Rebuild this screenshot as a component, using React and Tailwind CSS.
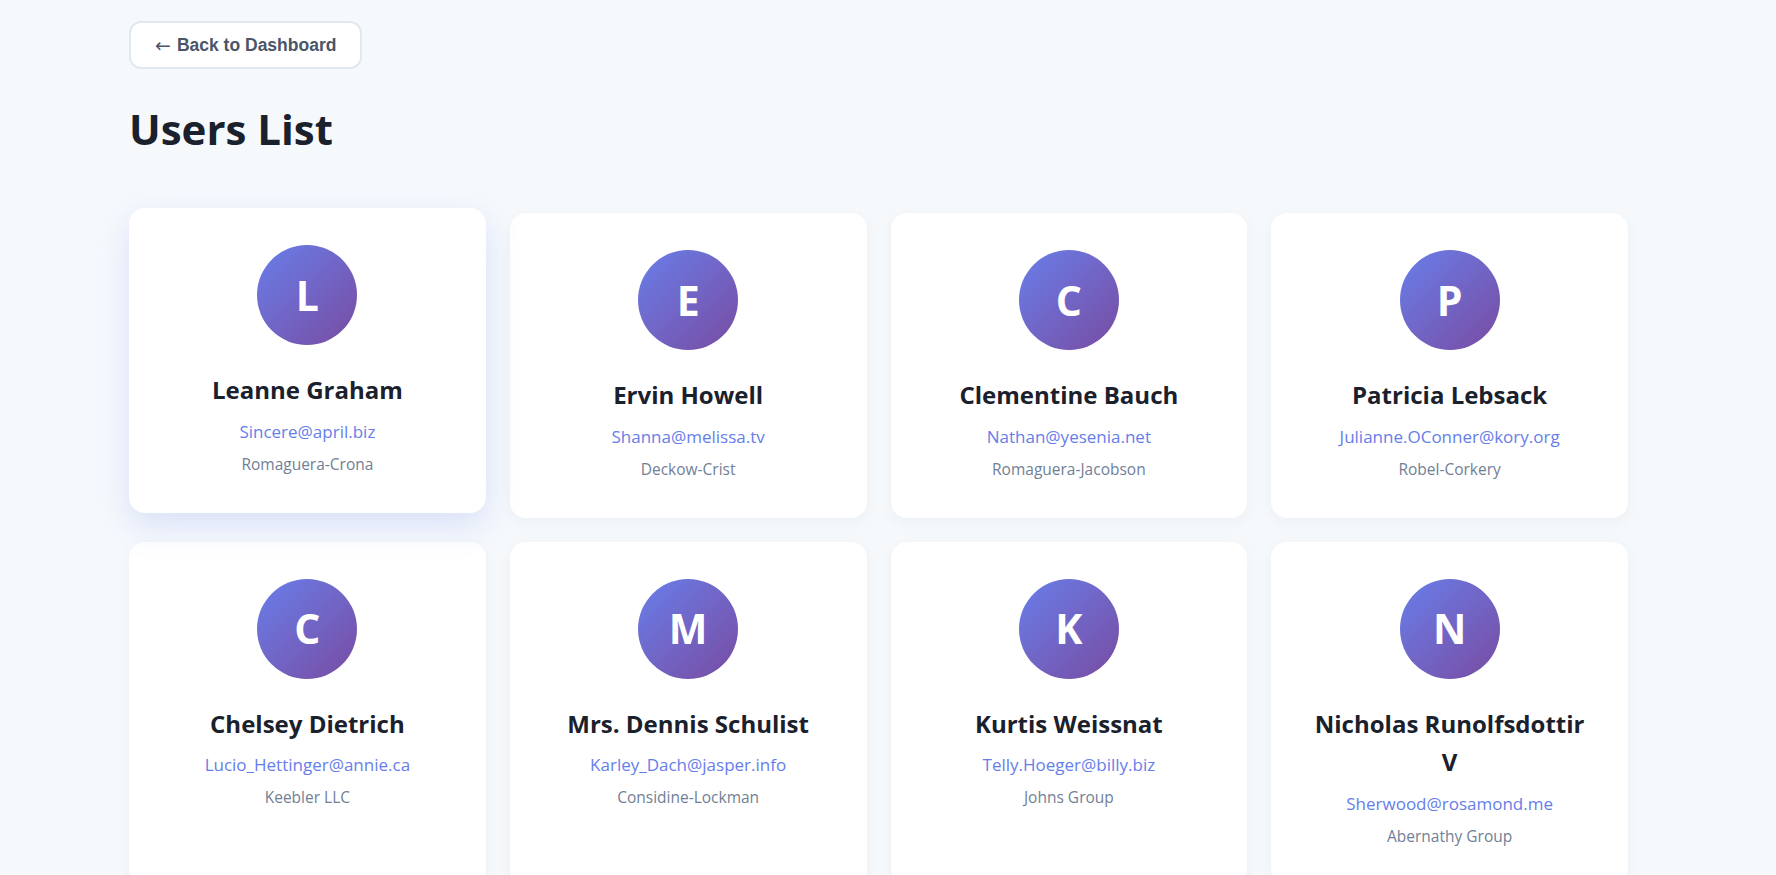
const users = [
  { name: 'Leanne Graham', email: 'Sincere@april.biz', company: 'Romaguera-Crona' },
  { name: 'Ervin Howell', email: 'Shanna@melissa.tv', company: 'Deckow-Crist' },
  { name: 'Clementine Bauch', email: 'Nathan@yesenia.net', company: 'Romaguera-Jacobson' },
  { name: 'Patricia Lebsack', email: 'Julianne.OConner@kory.org', company: 'Robel-Corkery' },
  { name: 'Chelsey Dietrich', email: 'Lucio_Hettinger@annie.ca', company: 'Keebler LLC' },
  { name: 'Mrs. Dennis Schulist', email: 'Karley_Dach@jasper.info', company: 'Considine-Lockman' },
  { name: 'Kurtis Weissnat', email: 'Telly.Hoeger@billy.biz', company: 'Johns Group' },
  { name: 'Nicholas Runolfsdottir V', email: 'Sherwood@rosamond.me', company: 'Abernathy Group' },
  { name: 'Glenna Reichert', email: 'Chaim_McDermott@dana.io', company: 'Yost and Sons' },
  { name: 'Clementina DuBuque', email: 'Rey.Padberg@karina.biz', company: 'Hoeger LLC' },
];

function UserCard({ user, hovered }) {
  return (
    <div
      className={
        hovered
          ? 'bg-white rounded-2xl px-9 pt-[37px] pb-9 text-center -translate-y-[5px] shadow-[0_12px_34px_rgba(102,126,234,0.2)]'
          : 'bg-white rounded-2xl px-9 pt-[37px] pb-9 text-center shadow-[0_4px_14px_rgba(15,23,42,0.045)]'
      }
    >
      {/* Avatar */}
      <div className="mx-auto mb-[26px] w-[100px] h-[100px] rounded-full bg-linear-to-br from-[#667eea] to-[#764ba2] flex items-center justify-center text-white text-[41px] font-bold leading-none">
        {user.name[0]}
      </div>

      <h3 className="text-[24px] font-bold leading-[1.6] text-[#1a202c]">{user.name}</h3>
      <p className="mt-2 text-[17px] leading-[1.6] text-[#667eea]">{user.email}</p>
      <p className="mt-[7px] text-[15.5px] leading-[1.6] text-[#718096]">{user.company}</p>
    </div>
  );
}

export default function App() {
  return (
    <div className="min-h-screen bg-[#f6f9fc] pt-[21px] pb-10 font-['Open_Sans',sans-serif]">
      <div className="ml-[129px] w-[1499px]">
        <button className="h-12 px-6 flex items-center bg-white border-2 border-[#e2e8f0] rounded-xl text-[17.5px] font-bold text-[#4a5568] font-['Liberation_Sans',Arial,sans-serif]">
          <span className="font-normal font-['DejaVu_Sans',sans-serif] text-[19px] leading-none mr-[6px]">←</span>
          Back to Dashboard
        </button>

        <h1 className="mt-[35px] mb-[59px] text-[42px] font-bold leading-[1.2] text-[#1a202c]">Users List</h1>

        <div className="grid grid-cols-4 gap-6">
          {users.map((u, i) => (
            <UserCard key={u.email} user={u} hovered={i === 0} />
          ))}
        </div>
      </div>
    </div>
  );
}
